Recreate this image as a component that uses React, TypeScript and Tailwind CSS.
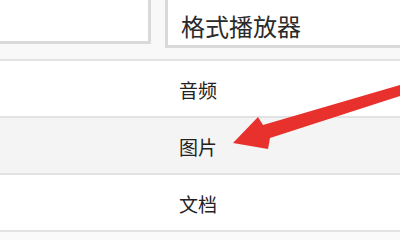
const rows = [
  { label: "音频", bg: "bg-white" },
  { label: "图片", bg: "bg-[#f4f4f4]" },
  { label: "文档", bg: "bg-white" },
  { label: "", bg: "bg-[#fafafa]" },
];

const Arrow = () => (
  <svg className="absolute left-0 top-0" width="400" height="240" viewBox="0 0 400 240">
    <polygon
      points="233,143 258,117 263,125 400,85 400,96 270,138 268,149"
      fill="#e8302c"
    />
  </svg>
);

export default function App() {
  return (
    <div
      className="relative w-[400px] h-[240px] overflow-hidden bg-[#f8f8f8] text-[#222]"
      style={{ fontFamily: '"Noto Sans CJK SC", "Noto Sans", sans-serif' }}
    >
      <div className="flex items-start h-[59px] gap-[14px]">
        <div className="w-[151px] h-[44px] bg-white border-r-[3px] border-b-[3px] border-[#d9d9d9]" />
        <div className="flex-1 h-[48px] bg-white border-l-[3px] border-b-[3px] border-[#d9d9d9] pl-[13px] pt-[9px] text-[24px] leading-[34px] text-[#2a2a2a]">
          格式播放器
        </div>
      </div>
      {rows.map((r) => (
        <div
          key={r.label || "empty"}
          className={`h-[57px] border-t-2 border-[#e3e3e3] ${r.bg} flex items-center justify-center pr-[4px] pt-[4px] text-[19px]`}
        >
          {r.label}
        </div>
      ))}
      <Arrow />
    </div>
  );
}
